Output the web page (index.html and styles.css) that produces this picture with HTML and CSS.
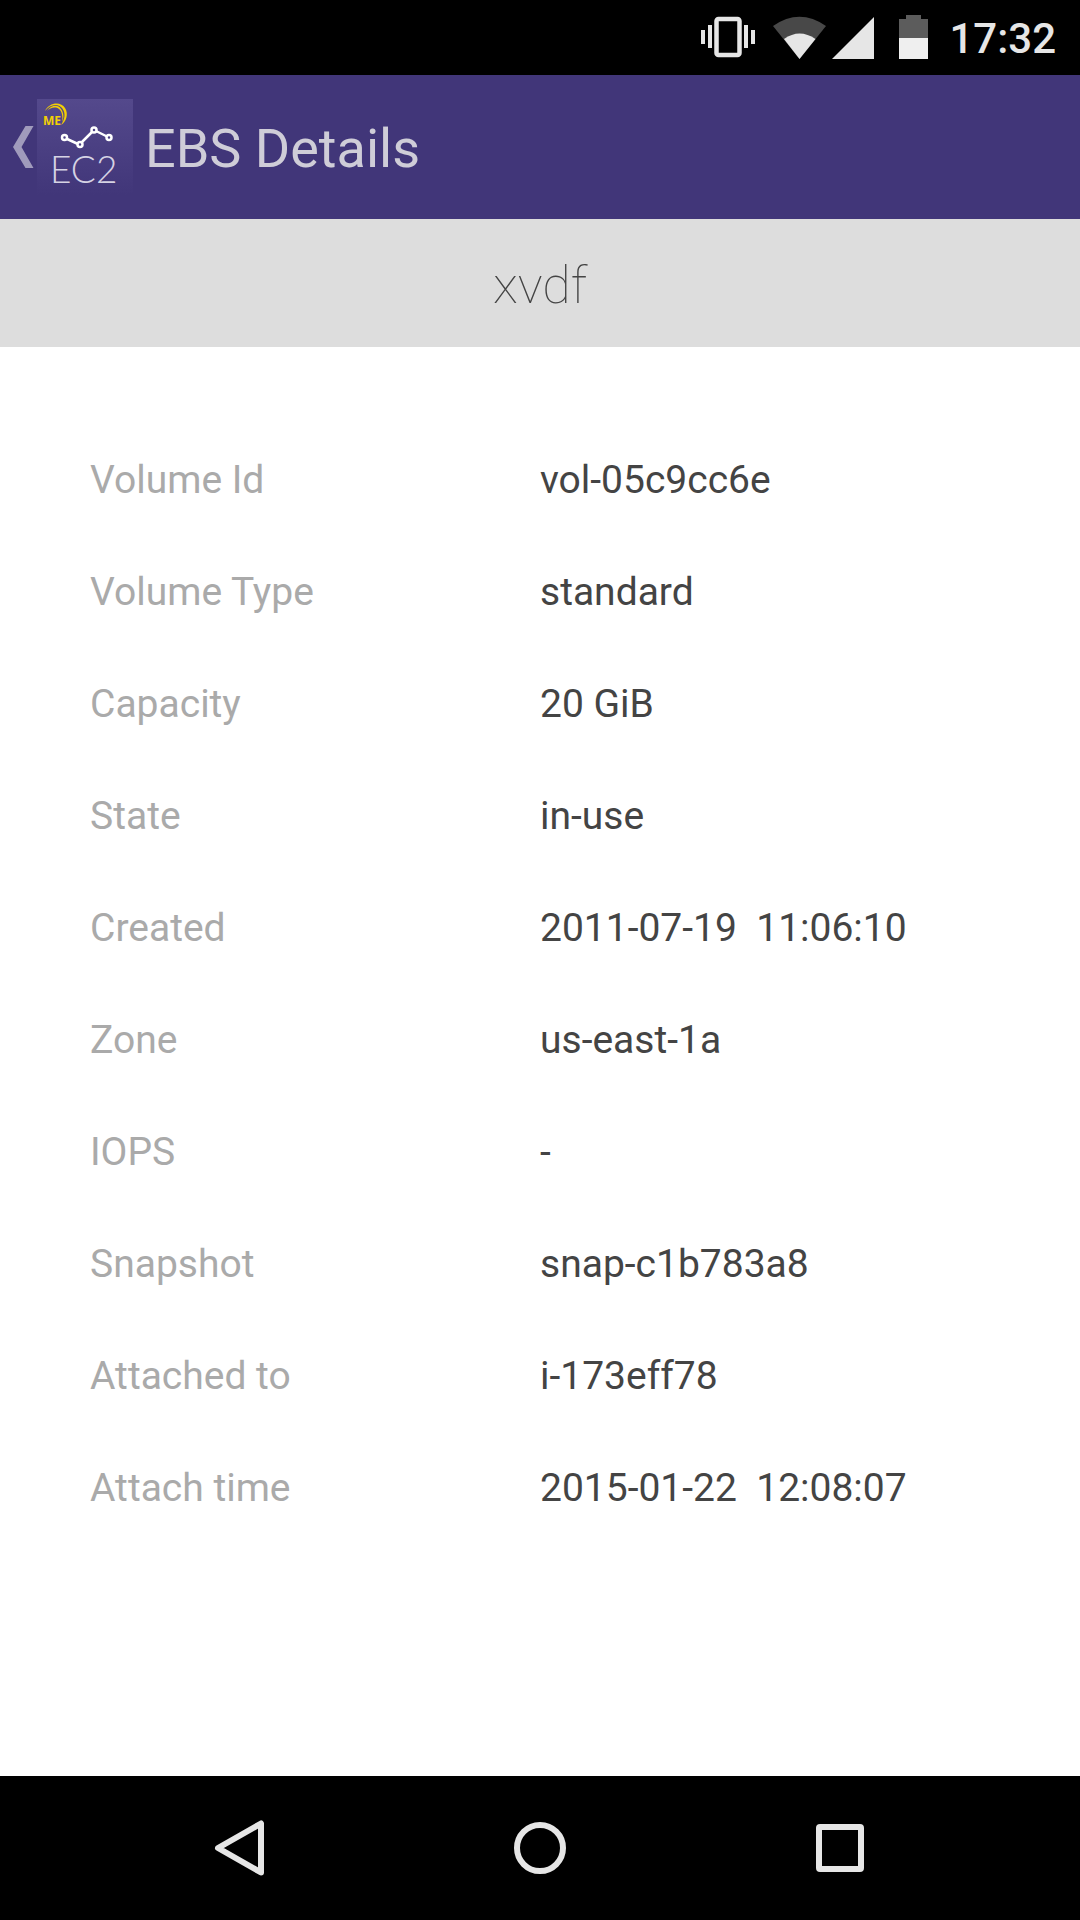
FILE: index.html
```html
<!DOCTYPE html>
<html lang="en">
<head>
    <meta charset="UTF-8" />
    <meta name="viewport" content="width=device-width, initial-scale=1.0"/>
    <title>EBS Details</title>
    <link rel="stylesheet" href="styles.css">
</head>
<body>

    <div class="status-bar">
        <svg class="status-icons" width="230" height="47" viewBox="0 0 230 47" aria-hidden="true">
            <!-- vibrate -->
            <g fill="#e6e6e6">
                <rect x="1" y="15" width="4" height="14"/>
                <rect x="8" y="10" width="4" height="23"/>
                <rect x="44" y="10" width="4" height="23"/>
                <rect x="51" y="15" width="4" height="14"/>
            </g>
            <rect x="16.5" y="4" width="23" height="36" rx="2" fill="none" stroke="#e6e6e6" stroke-width="4.5"/>
            <!-- wifi -->
            <path d="M73 11Q99.5 -7.5 126 11L99.5 44Z" fill="#484848"/>
            <path d="M84 24Q99.5 13 115.5 24L99.5 44Z" fill="#e6e6e6"/>
            <!-- signal -->
            <path d="M132 44L174 2V44Z" fill="#e6e6e6"/>
            <!-- battery -->
            <path d="M206 0h15v4h7v19h-29V4h7Z" fill="#5c5c5c"/>
            <rect x="199" y="23" width="29" height="21" fill="#efefef"/>
        </svg>
        <span class="clock">17:32</span>
    </div>

    <header class="app-bar">
        <button class="up" type="button" aria-label="Back">
            <svg width="21" height="42" viewBox="0 0 21 42" aria-hidden="true">
                <path d="M12.5 0H20.5L8.5 21L20.5 42H12.5L0 21Z" fill="#a09bbc"/>
            </svg>
            <svg class="logo" width="96" height="96" viewBox="0 0 96 96" aria-hidden="true">
                <defs>
                    <linearGradient id="logo-bg" x1="0" y1="0" x2="0" y2="1">
                        <stop offset="0" stop-color="#54498c"/>
                        <stop offset="1" stop-color="#413679"/>
                    </linearGradient>
                </defs>
                <rect width="96" height="96" fill="url(#logo-bg)"/>
                <g fill="#f2cf05">
                    <path d="M8 12C12 3 24 2 28 9C32 15 29 23 24 26C28 20 29 14 25 9C21 4 13 5 8 12Z"/>
                    <path d="M10 12C14 6 21 5 24 10C27 14 27 19 25 23C26 18 25 12 22 10C18 7 13 9 10 12Z"/>
                    <text class="logo-me" x="6" y="26">ME</text>
                </g>
                <g fill="none" stroke="#fff" stroke-width="2.5">
                    <path d="M29 39.5L41 45M45 43L55 33M59 32L70 37.5"/>
                    <circle cx="27.5" cy="38.5" r="2.5"/>
                    <circle cx="43" cy="45.5" r="2.5"/>
                    <circle cx="57" cy="31" r="2.5"/>
                    <circle cx="72" cy="38.5" r="2.5"/>
                </g>
                <text class="logo-name" x="13" y="84">EC2</text>
            </svg>
        </button>
        <h1>EBS Details</h1>
    </header>

    <h2 class="device">xvdf</h2>

    <main>
        <dl class="details">
            <dt>Volume Id</dt>
            <dd>vol-05c9cc6e</dd>
            <dt>Volume Type</dt>
            <dd>standard</dd>
            <dt>Capacity</dt>
            <dd>20 GiB</dd>
            <dt>State</dt>
            <dd>in-use</dd>
            <dt>Created</dt>
            <dd>2011-07-19  11:06:10</dd>
            <dt>Zone</dt>
            <dd>us-east-1a</dd>
            <dt>IOPS</dt>
            <dd>-</dd>
            <dt>Snapshot</dt>
            <dd>snap-c1b783a8</dd>
            <dt>Attached to</dt>
            <dd>i-173eff78</dd>
            <dt>Attach time</dt>
            <dd>2015-01-22  12:08:07</dd>
        </dl>
    </main>

    <nav class="nav-bar">
        <button type="button" aria-label="Back">
            <svg width="60" height="60" viewBox="0 0 60 60" aria-hidden="true">
                <path d="M51 5.5V54.5L8 30Z"/>
            </svg>
        </button>
        <button type="button" aria-label="Home">
            <svg width="60" height="60" viewBox="0 0 60 60" aria-hidden="true">
                <circle cx="30" cy="30" r="23"/>
            </svg>
        </button>
        <button type="button" aria-label="Recent apps">
            <svg width="60" height="60" viewBox="0 0 60 60" aria-hidden="true">
                <rect x="9" y="9" width="42" height="42" rx="1"/>
            </svg>
        </button>
    </nav>

</body>
</html>
```
FILE: styles.css
```css
* {
    box-sizing: border-box;
    margin: 0;
    padding: 0;
}

body {
    display: flex;
    flex-direction: column;
    min-height: 100vh;
    background: #fff;
    font-family: Roboto, sans-serif;
}

button {
    background: none;
    border: none;
    cursor: pointer;
}

.status-bar {
    display: flex;
    justify-content: flex-end;
    align-items: center;
    gap: 19px;
    height: 75px;
    padding: 2px 24px 0 0;
    background: #000;
    color: #e6e6e6;
}

.clock {
    font-size: 42px;
    font-weight: 500;
    line-height: 48px;
}

.app-bar {
    display: flex;
    align-items: center;
    gap: 12px;
    height: 144px;
    padding-left: 13px;
    background: #413679;
    color: #cfcdd8;
}

.up {
    display: flex;
    align-items: center;
    gap: 3px;
}

.logo-me {
    font-family: "Open Sans", sans-serif;
    font-size: 12px;
    font-weight: 700;
}

.logo-name {
    fill: #d6d3e4;
    font-family: Lato, sans-serif;
    font-size: 37px;
    font-weight: 300;
}

h1 {
    padding-top: 2px;
    font-size: 54px;
    font-weight: 400;
}

.device {
    height: 128px;
    background: #ddd;
    color: #444;
    font-size: 52px;
    font-weight: 100;
    line-height: 134px;
    text-align: center;
}

main {
    flex: 1;
    padding: 77px 90px;
}

.details {
    display: grid;
    grid-template-columns: 1fr 1fr;
    font-size: 39px;
    line-height: 112px;
}

.details dt {
    color: #aaa;
}

.details dd {
    color: #444;
    white-space: pre-wrap;
}

.nav-bar {
    display: flex;
    justify-content: center;
    height: 144px;
    background: #000;
}

.nav-bar button {
    display: flex;
    flex: 0 1 300px;
    justify-content: center;
    align-items: center;
}

.nav-bar svg {
    fill: none;
    stroke: #e6e6e6;
    stroke-width: 6;
    stroke-linejoin: round;
}
```
